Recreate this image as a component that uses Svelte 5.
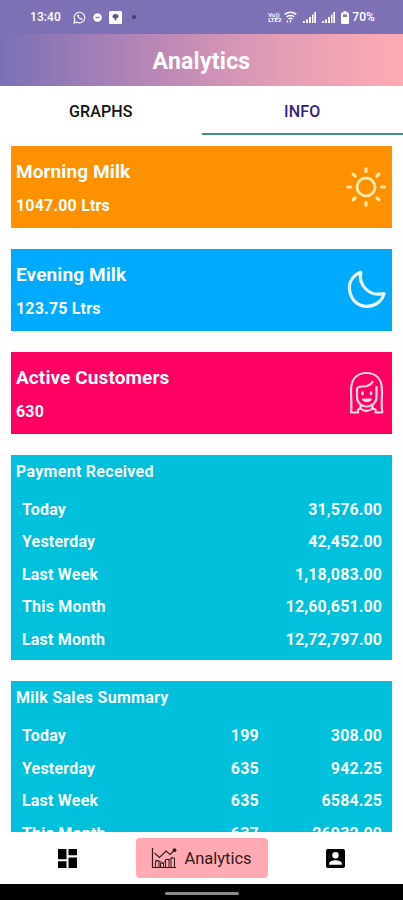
<script>
    const cards = [
        { title: "Morning Milk", value: "1047.00 Ltrs", color: "#ff9100", icon: "sun" },
        { title: "Evening Milk", value: "123.75 Ltrs", color: "#00aaff", icon: "moon" },
        { title: "Active Customers", value: "630", color: "#ff0062", icon: "customer" },
    ];

    const payments = [
        ["Today", "31,576.00"],
        ["Yesterday", "42,452.00"],
        ["Last Week", "1,18,083.00"],
        ["This Month", "12,60,651.00"],
        ["Last Month", "12,72,797.00"],
    ];

    const sales = [
        ["Today", "199", "308.00"],
        ["Yesterday", "635", "942.25"],
        ["Last Week", "635", "6584.25"],
        ["This Month", "637", "26932.00"],
    ];

    const rays = [0, 45, 90, 135, 180, 225, 270, 315];

    let tab = $state("INFO");
</script>

<div class="screen">
    <div class="status">
        <span class="time">13:40</span>
        <svg class="whatsapp" width="13" height="13" viewBox="0 0 13 13" fill="none" stroke="#fff">
            <path d="M1 12l.8-3A5.3 5.3 0 1 1 4 11.200z" stroke-width="1.100" />
            <path d="M4.300 3.700c-.8 2 2.600 5.500 4.900 4.900l.3-1.200-1.500-.7-.8.7-1.600-1.700.6-.9-.7-1.400z" fill="#fff" stroke="none" />
        </svg>
        <svg class="dash" width="9" height="9" viewBox="0 0 9 9">
            <circle cx="4.500" cy="4.500" r="4.300" fill="#fff" />
            <path d="M2.500 4.500h4" stroke="#7d70b5" stroke-width="1.400" />
        </svg>
        <svg class="app" width="13" height="13" viewBox="0 0 13 13">
            <rect width="13" height="13" rx="1.500" fill="#fff" />
            <path d="M6.500 3a3 2.600 0 0 1 3 2.600c0 1.200-1 1.800-2.300 2l.3 1.700h-2l.3-1.700c-1.300-.2-2.300-.8-2.300-2A3 2.600 0 0 1 6.500 3z" fill="#5c528f" />
        </svg>
        <i class="more"></i>
        <div class="signals">
            <div class="volte"><span>Vo))</span><span>LTE2</span></div>
            <svg width="13" height="12" viewBox="0 0 13 12" fill="none" stroke="#fff" stroke-width="1.500">
                <path d="M.7 3.400Q6.500-1 12.300 3.400M2.600 5.800q3.900-2.700 7.800 0M4.400 8q2.100-1.500 4.200 0" />
                <path d="M3.500 9.500v2M6.500 9v2.500" stroke-width="1.200" />
            </svg>
            {#each [0, 1] as sim (sim)}
                <svg class="bars" width="13" height="12" viewBox="0 0 13 12" fill="#fff">
                    <path d="M0 10h1.800v2H0zM3 8.500h2V12H3zM6 6h2v6H6zM9 3.500h1.500V12H9zM11.300 1H13v11h-1.700z" />
                </svg>
            {/each}
            <svg class="battery" width="8" height="13" viewBox="0 0 8 13">
                <path d="M2.500 0h3v1.500h1.500a1 1 0 0 1 1 1V12a1 1 0 0 1-1 1H1a1 1 0 0 1-1-1V2.500a1 1 0 0 1 1-1h1.500z" fill="#fff" />
                <path d="M2 3.500h4V6H2z" fill="#7d70b5" />
            </svg>
            <span class="percent">70%</span>
        </div>
    </div>

    <header>Analytics</header>

    <nav class="tabs">
        {#each ["GRAPHS", "INFO"] as name (name)}
            <button class:active={tab === name} onclick={() => (tab = name)}>{name}</button>
        {/each}
    </nav>

    <main>
        {#each cards as card (card.title)}
            <section class="card" style:background={card.color}>
                <div class="text">
                    <h2>{card.title}</h2>
                    <p>{card.value}</p>
                </div>
                {#if card.icon === "sun"}
                    <svg width="40" height="42" viewBox="0 0 40 42" fill="none" stroke="#ffe9a8" stroke-linecap="round">
                        <circle cx="20" cy="21" r="9" stroke-width="2.800" />
                        {#each rays as angle (angle)}
                            <path d="M20 5.500V2.800" stroke-width="3.200" transform="rotate({angle} 20 21)" />
                        {/each}
                    </svg>
                {:else if card.icon === "moon"}
                    <svg width="40" height="42" viewBox="0 0 40 42" fill="none" stroke="#e9fbff" stroke-width="3.200" stroke-linejoin="round">
                        <path d="M14.800 3.300C6 7 2.400 14 3.600 21.500 5 31 12 37.300 21 37.300c8.500 0 15.300-5.500 17-12.800-7 1.600-13.500.3-18.200-4.500-4.500-4.600-6.300-10.500-5-16.700z" />
                    </svg>
                {:else}
                    <svg width="40" height="44" viewBox="0 0 40 44" fill="none" stroke="#ffd9e8" stroke-width="2.200" stroke-linejoin="round" stroke-linecap="round">
                        <path d="M14.500 35v2.500Q20.500 42.500 26.500 37.500V35" />
                        <path d="M14.500 37.500L12 38.500V41.500H5C6 35 5 28 5 20 5 8 11 2 20.500 2S36 8 36 20c0 8-.8 15 .3 21.500H29.500V38.500L26.500 37.500" />
                        <path d="M11 18v8c0 5.500 4.200 9.500 9.700 9.500s9.800-4 9.800-9.500V16" />
                        <path d="M11 18c0-2 2-2.500 5.500-2.500 5 0 8-1.500 10-4.500" />
                        <path d="M16.500 21.500v1.500M25 21.500v1.500" stroke-width="2.600" />
                        <path d="M17 28.500q3.800 3.400 7.600 0z" />
                    </svg>
                {/if}
            </section>
        {/each}

        <section class="table">
            <h3>Payment Received</h3>
            {#each payments as [label, amount] (label)}
                <div class="row"><span>{label}</span><span class="amount">{amount}</span></div>
            {/each}
        </section>

        <section class="table">
            <h3>Milk Sales Summary</h3>
            {#each sales as [label, count, amount] (label)}
                <div class="row">
                    <span>{label}</span><span class="count">{count}</span><span class="amount">{amount}</span>
                </div>
            {/each}
        </section>
    </main>

    <nav class="bottom">
        <button aria-label="Dashboard">
            <svg width="19" height="19" viewBox="0 0 19 19">
                <path d="M0 0h8.500v10.300H0zM10.500 0H19v6.200h-8.500zM0 12.300h8.500V19H0zM10.500 8.500H19V19h-8.500z" />
            </svg>
        </button>
        <button class="current">
            <svg width="26" height="21" viewBox="0 0 26 21" fill="none" stroke="#35191d">
                <path d="M1.500 0v19.500H25" stroke-width="1.200" />
                <path d="M3.500 5l5 4.500L15 3l4 3.500L24 2" stroke-width="1.100" />
                <path d="M4.500 19v-6h3.500V19M9.500 19v-4h3v4M14.500 19v-7.500h3.500V19M20 19v-9h3.500v9" stroke-width="1" />
                <path d="M4.500 12l4 1 3.500 2.500 4-4.500 2 1 3.500-3" stroke-width=".8" />
                <circle cx="23.500" cy="2.200" r="1.900" fill="#35191d" stroke="none" />
            </svg>
            <span>Analytics</span>
        </button>
        <button aria-label="Account">
            <svg width="19" height="19" viewBox="0 0 19 19">
                <rect width="19" height="19" rx="2" />
                <circle cx="9.500" cy="6.300" r="3.200" fill="#fff" />
                <path d="M3.200 15.800v-1.200c0-2.200 4.200-3.300 6.300-3.300s6.300 1.100 6.300 3.300v1.200z" fill="#fff" />
            </svg>
        </button>
    </nav>

    <div class="gesture"><i></i></div>
</div>

<style>
    .screen {
        display: flex;
        flex-direction: column;
        width: 403px;
        height: 900px;
        overflow: hidden;
        background: #fefefe;
        font-family: Roboto, sans-serif;
    }

    .status {
        display: flex;
        align-items: center;
        flex: none;
        box-sizing: border-box;
        height: 34px;
        padding: 0 28px 0 30px;
        background: #7d70b5;
        color: #fff;
        font-size: 12px;
        font-weight: 500;
    }

    .time {
        width: 43px;
        letter-spacing: 0.1px;
    }

    .dash {
        margin-left: 7px;
    }

    .app {
        margin-left: 7px;
    }

    .more {
        width: 4px;
        height: 4px;
        margin-left: 10px;
        border-radius: 50%;
        background: #433a78;
    }

    .signals {
        display: flex;
        align-items: center;
        margin-left: auto;
    }

    .volte {
        display: flex;
        flex-direction: column;
        width: 16px;
        font-size: 6px;
        font-weight: 700;
        line-height: 5.5px;
    }

    .bars {
        margin-left: 6px;
    }

    .battery {
        margin-left: 6px;
    }

    .percent {
        margin-left: 3px;
        letter-spacing: 0.1px;
    }

    header {
        flex: none;
        height: 52px;
        background: linear-gradient(90deg, #7b70b7, #bc88b6 40%, #e49eb5 70%, #ffaab3);
        color: #fff;
        font-size: 23px;
        font-weight: 700;
        line-height: 56px;
        letter-spacing: 0.25px;
        text-align: center;
    }

    button {
        padding: 0;
        border: 0;
        background: none;
        font-family: inherit;
    }

    .tabs {
        display: flex;
        flex: none;
        height: 50px;
        background: #fff;
    }

    .tabs button {
        flex: 1;
        box-sizing: border-box;
        height: 49px;
        padding-top: 3px;
        border-bottom: 2px solid transparent;
        color: #111;
        font-size: 16px;
        font-weight: 500;
        letter-spacing: 0.15px;
    }

    .tabs .active {
        border-color: #3d9587;
        color: #36217c;
    }

    main {
        display: flex;
        flex: 1;
        flex-direction: column;
        gap: 21px;
        min-height: 0;
        padding: 10px 11px 0;
        overflow: hidden;
    }

    section {
        flex: none;
        color: #f4feff;
    }

    h2,
    h3,
    p {
        margin: 0;
        font-weight: 700;
    }

    .card {
        display: flex;
        align-items: center;
        justify-content: space-between;
        box-sizing: border-box;
        height: 82px;
        padding: 0 6px 0 5px;
    }

    .text {
        padding-top: 4px;
    }

    h2 {
        font-size: 19px;
        line-height: 34px;
        letter-spacing: 0.1px;
    }

    p {
        font-size: 16px;
        line-height: 34px;
        letter-spacing: 0.18px;
    }

    .table {
        box-sizing: border-box;
        height: 205px;
        padding: 0 10px 0 11px;
        background: #00c0dc;
        font-size: 16px;
        font-weight: 700;
        letter-spacing: 0.2px;
    }

    .card + .table {
        height: 205.5px;
        margin-top: -0.5px;
    }

    h3 {
        margin: 0 0 5px -6px;
        font-size: 16px;
        line-height: 34px;
        letter-spacing: 0.28px;
    }

    .row {
        display: flex;
        line-height: 32.5px;
    }

    .row span:first-child {
        width: 137px;
    }

    .count {
        width: 100px;
        text-align: right;
    }

    .amount {
        flex: 1;
        letter-spacing: 0.1px;
        text-align: right;
    }

    .bottom {
        display: flex;
        align-items: center;
        flex: none;
        height: 52px;
        background: #fff;
    }

    .bottom button {
        display: flex;
        align-items: center;
        justify-content: center;
        flex: 1;
        height: 40px;
    }

    .bottom .current {
        flex: none;
        gap: 7px;
        width: 132px;
        border-radius: 4px;
        background: #ffa9b2;
        color: #35191d;
        font-size: 16.5px;
    }

    .gesture {
        display: flex;
        align-items: center;
        justify-content: center;
        flex: none;
        box-sizing: border-box;
        height: 16px;
        padding-top: 2px;
        background: #000;
    }

    .gesture i {
        width: 74px;
        height: 3px;
        border-radius: 2px;
        background: #8c8c8c;
    }
</style>
